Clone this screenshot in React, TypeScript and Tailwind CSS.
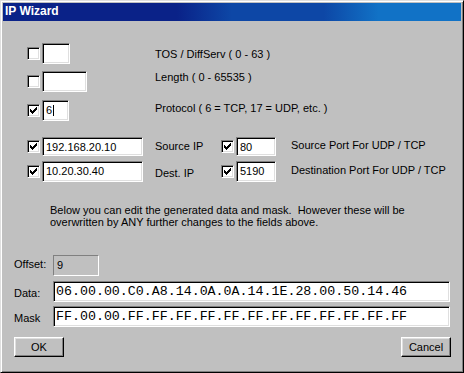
import React from "react";

const sunken =
  "border border-t-[#808080] border-l-[#808080] border-b-white border-r-white shadow-[inset_1px_1px_#000,inset_-1px_-1px_#dfdfdf]";

function Check({ checked, className = "" }: { checked?: boolean; className?: string }) {
  return (
    <div className={`w-[13px] h-[13px] bg-white shrink-0 flex items-center justify-center ${sunken} ${className}`}>
      {checked && (
        <svg width="7" height="7" viewBox="0 0 7 7" shapeRendering="crispEdges">
          <path
            d="M6 0h1v3h-1zM5 1h1v3h-1zM4 2h1v3h-1zM3 3h1v3h-1zM2 4h1v3h-1zM1 3h1v3h-1zM0 2h1v3h-1z"
            fill="#000"
          />
        </svg>
      )}
    </div>
  );
}

function Box({
  className = "",
  children,
}: {
  className?: string;
  children?: React.ReactNode;
}) {
  return (
    <div className={`bg-white shrink-0 pl-[3px] pt-[3px] leading-[13px] ${sunken} ${className}`}>
      {children}
    </div>
  );
}

function Button({ label }: { label: string }) {
  return (
    <div className="w-[50px] h-[20px] flex items-center justify-center border border-t-white border-l-white border-b-black border-r-black shadow-[inset_-1px_-1px_#808080,inset_1px_1px_#dfdfdf]">
      {label}
    </div>
  );
}

export default function App() {
  return (
    <div
      className="w-[464px] h-[373px] bg-[#c0c0c0] text-black text-[11px] leading-[13px] overflow-hidden p-[2px] border border-t-[#dfdfdf] border-l-[#dfdfdf] border-b-black border-r-black shadow-[inset_1px_1px_#fff,inset_-1px_-1px_#808080] flex flex-col"
      style={{ fontFamily: '"Liberation Sans", Arial, sans-serif' }}
    >
      {/* Title bar */}
      <div className="h-[18px] shrink-0 pl-[2px] bg-[linear-gradient(90deg,#0a2288_0%,#0a2288_38%,#0d47a6_50%,#0d47a6_70%,#1172c6_82%,#1172c6_100%)]">
        <div className="text-white font-bold text-[12px] leading-[16px]">IP Wizard</div>
      </div>

      {/* Row 1 */}
      <div className="flex items-start pl-[24px] mt-[22px] h-[21px]">
        <Check className="mt-[4px]" />
        <div className="w-[113px] ml-[2px]">
          <Box className="w-[28px] h-[21px]" />
        </div>
        <div className="mt-[5px]">TOS / DiffServ ( 0 - 63 )</div>
      </div>

      {/* Row 2 */}
      <div className="flex items-start pl-[24px] mt-[7px] h-[21px]">
        <Check className="mt-[4px]" />
        <div className="w-[113px] ml-[2px]">
          <Box className="w-[45px] h-[21px]" />
        </div>
        <div className="mt-0">Length ( 0 - 65535 )</div>
      </div>

      {/* Row 3 */}
      <div className="flex items-start pl-[24px] mt-[8px] h-[21px]">
        <Check checked className="mt-[4px]" />
        <div className="w-[113px] ml-[2px]">
          <Box className="w-[27px] h-[21px]">
            <div className="flex items-start">
              <span>6</span>
              <span className="w-px h-[11px] bg-black ml-[1px] mt-[1px]" />
            </div>
          </Box>
        </div>
        <div className="mt-[2px]">Protocol ( 6 = TCP, 17 = UDP, etc. )</div>
      </div>

      {/* Row 4 */}
      <div className="flex items-start pl-[24px] mt-[16px] h-[19px]">
        <Check checked className="mt-[3px]" />
        <div className="w-[113px] ml-[2px]">
          <Box className="w-[101px] h-[19px] pt-[2px]">192.168.20.10</Box>
        </div>
        <div className="w-[66px] mt-[3px]">Source IP</div>
        <Check checked className="mt-[3px]" />
        <div className="w-[55px] ml-[2px]">
          <Box className="w-[40px] h-[19px] pt-[2px]">80</Box>
        </div>
        <div className="mt-[2px]">Source Port For UDP / TCP</div>
      </div>

      {/* Row 5 */}
      <div className="flex items-start pl-[24px] mt-[5px] h-[21px]">
        <Check checked className="mt-[4px]" />
        <div className="w-[113px] ml-[2px]">
          <Box className="w-[101px] h-[21px]">10.20.30.40</Box>
        </div>
        <div className="w-[66px] mt-[6px]">Dest. IP</div>
        <Check checked className="mt-[4px]" />
        <div className="w-[55px] ml-[2px]">
          <Box className="w-[40px] h-[21px]">5190</Box>
        </div>
        <div className="mt-[3px]">Destination Port For UDP / TCP</div>
      </div>

      {/* Paragraph */}
      <div className="pl-[47px] mt-[22px] leading-[12px]">
        <div>Below you can edit the generated data and mask.&nbsp; However these will be</div>
        <div>overwritten by ANY further changes to the fields above.</div>
      </div>

      {/* Offset */}
      <div className="flex items-start pl-[11px] mt-[27px] h-[21px]">
        <div className="w-[39px] mt-[3px]">Offset:</div>
        <div className="w-[46px] h-[21px] border border-t-[#808080] border-l-[#808080] border-b-white border-r-white pl-[3px] pt-[3px]">
          9
        </div>
      </div>

      {/* Data */}
      <div className="flex items-start pl-[11px] mt-[5px] h-[21px]">
        <div className="w-[39px] mt-[6px]">Data:</div>
        <div
          className={`w-[397px] h-[21px] bg-white pl-[2px] pt-[2px] text-[13.3px] leading-[16px] ${sunken}`}
          style={{ fontFamily: '"Liberation Mono", "Courier New", monospace' }}
        >
          06.00.00.C0.A8.14.0A.0A.14.1E.28.00.50.14.46
        </div>
      </div>

      {/* Mask */}
      <div className="flex items-start pl-[11px] mt-[4px] h-[21px]">
        <div className="w-[39px] mt-[6px]">Mask</div>
        <div
          className={`w-[397px] h-[21px] bg-white pl-[2px] pt-[2px] text-[13.3px] leading-[16px] ${sunken}`}
          style={{ fontFamily: '"Liberation Mono", "Courier New", monospace' }}
        >
          FF.00.00.FF.FF.FF.FF.FF.FF.FF.FF.FF.FF.FF.FF
        </div>
      </div>

      {/* Buttons */}
      <div className="flex justify-between pl-[11px] pr-[10px] mt-[10px]">
        <Button label="OK" />
        <Button label="Cancel" />
      </div>
    </div>
  );
}
